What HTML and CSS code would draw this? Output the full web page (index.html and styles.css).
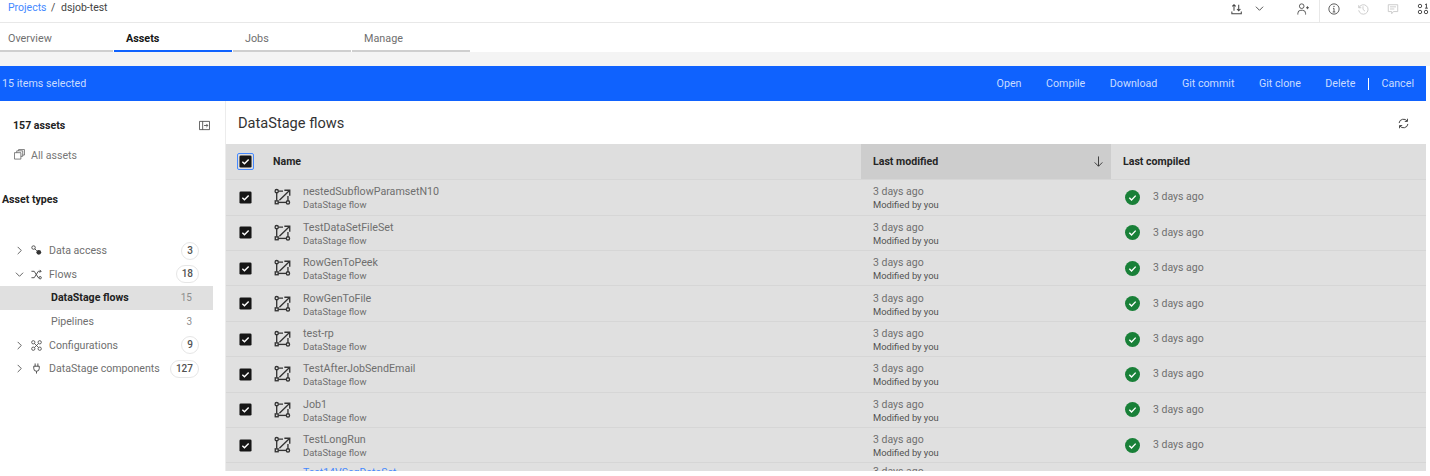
FILE: index.html
```html
<!DOCTYPE html>
<html lang="en">
<head>
    <meta charset="UTF-8">
    <title>dsjob-test</title>
    <link rel="stylesheet" href="styles.css">
</head>
<body>
    <svg class="defs" width="0" height="0">
        <symbol id="flow" viewBox="0 0 20 20">
            <g fill="none" stroke="currentColor" stroke-width="1.500">
                <circle cx="3" cy="3.500" r="1.800"/>
                <path d="M4.800 3.500h5.200M3 5.300V14"/>
                <rect x="1.400" y="14.300" width="3.200" height="3.200"/>
                <path d="M4.600 16h9"/>
                <circle cx="15.500" cy="16" r="1.800"/>
                <path d="M15.500 14.200V9M6 13.500L17.500 2.500M11.500 2.500h6v6"/>
            </g>
        </symbol>
        <symbol id="tick" viewBox="0 0 14 14">
            <rect x="0.500" y="0.500" width="13" height="13" rx="1.500" fill="#161616"/>
            <path d="M3.600 7.200l2.300 2.300 4.500-4.600" fill="none" stroke="#fff" stroke-width="1.500"/>
        </symbol>
        <symbol id="ok" viewBox="0 0 16 16">
            <circle cx="8" cy="8" r="8" fill="#198038"/>
            <path d="M4.600 8.200l2.400 2.400 4.400-4.600" fill="none" stroke="#fff" stroke-width="1.500"/>
        </symbol>
        <symbol id="chev-right" viewBox="0 0 10 10">
            <path d="M3 1l4 4-4 4" fill="none" stroke="currentColor" stroke-width="1"/>
        </symbol>
        <symbol id="chev-down" viewBox="0 0 10 10">
            <path d="M1 3l4 4 4-4" fill="none" stroke="currentColor" stroke-width="1"/>
        </symbol>
    </svg>

    <!-- Breadcrumb and actions -->
    <header class="top-bar">
        <div class="crumbs">
            <a class="crumb-link">Projects</a>
            <span class="crumb-sep">/</span>
            <span>dsjob-test</span>
        </div>
        <div class="top-icons">
            <svg class="top-icon icon-transfer" viewBox="0 0 14 14"><path d="M3.500 9V2M1.500 4l2-2 2 2M9 2v7M7 7l2 2 2-2M1 10v2.500h11V10" fill="none" stroke="currentColor" stroke-width="1.200"/></svg>
            <svg class="top-icon icon-caret" viewBox="0 0 10 10"><use href="#chev-down"/></svg>
            <svg class="top-icon icon-user" viewBox="0 0 14 14"><circle cx="5.500" cy="3.700" r="2.700" fill="none" stroke="currentColor"/><path d="M1 13.500v-1.500a3.500 3.500 0 0 1 3.500-3.500h2a3.500 3.500 0 0 1 3.500 3.500v1.500M10.500 5.500h3.500M12.200 3.800v3.400" fill="none" stroke="currentColor"/></svg>
            <span class="top-sep"></span>
            <svg class="top-icon icon-info" viewBox="0 0 14 14"><circle cx="7" cy="7" r="6" fill="none" stroke="currentColor"/><path d="M5.500 10.500h3M7 10.500V6.200H5.800" fill="none" stroke="currentColor"/><circle cx="7" cy="3.900" r=".8" fill="currentColor"/></svg>
            <svg class="top-icon icon-off icon-history" viewBox="0 0 14 14"><path d="M2 2.500v3h3M2.300 5.500a5.500 5.500 0 1 1-.3 3M7 3.800V7.500l2.300 2" fill="none" stroke="currentColor"/></svg>
            <svg class="top-icon icon-off icon-chat" viewBox="0 0 14 14"><path d="M1.500 2h11v8h-5l-2 2.500V10h-4z M3.500 4.500h7M3.500 7h5" fill="none" stroke="currentColor"/></svg>
            <svg class="top-icon icon-apps" viewBox="0 0 14 14"><g fill="none" stroke="currentColor" stroke-width="1.100"><circle cx="3.500" cy="3.500" r="2"/><circle cx="3.500" cy="10.500" r="2"/><circle cx="10.500" cy="10.500" r="2"/><path d="M9.500 2l1.500-1v5M9.300 6h3.400"/></g></svg>
        </div>
    </header>

    <nav class="tabs">
        <a class="tab">Overview</a>
        <a class="tab tab-active">Assets</a>
        <a class="tab">Jobs</a>
        <a class="tab">Manage</a>
    </nav>

    <div class="band"></div>

    <!-- Batch action bar -->
    <div class="batch-bar">
        <span class="batch-count">15 items selected</span>
        <div class="batch-actions">
            <a>Open</a>
            <a>Compile</a>
            <a>Download</a>
            <a>Git commit</a>
            <a>Git clone</a>
            <a>Delete</a>
            <span class="batch-sep"></span>
            <a>Cancel</a>
        </div>
    </div>

    <main class="main">
        <!-- Asset tree -->
        <aside class="sidebar">
            <div class="side-head">
                <span>157 assets</span>
                <svg class="side-toggle" viewBox="0 0 12 12"><path d="M.5 1.500h11v9H.5zM4 1.500v9M5.500 6h4M8 4.300L9.700 6 8 7.700" fill="none" stroke="currentColor" stroke-width=".9"/></svg>
            </div>
            <div class="all-assets">
                <svg class="all-icon" viewBox="0 0 12 12"><path d="M.5 4h7v7h-7zM3 4V2h6.500v6H7.500M5 2V.6h6.400v6H9.500" fill="none" stroke="currentColor" stroke-width=".8"/></svg>
                All assets
            </div>
            <div class="types-title">Asset types</div>
            <ul class="tree">
                <li class="tree-row">
                    <svg class="tree-caret"><use href="#chev-right"/></svg>
                    <svg class="tree-icon" viewBox="0 0 12 12"><circle cx="2.800" cy="2.800" r="1.900" fill="none" stroke="currentColor"/><path d="M4.300 4.300l2 2"/><circle cx="8.500" cy="8" r="2.600" fill="#333" stroke="none"/></svg>
                    <span class="tree-label">Data access</span>
                    <span class="badge">3</span>
                </li>
                <li class="tree-row">
                    <svg class="tree-caret"><use href="#chev-down"/></svg>
                    <svg class="tree-icon" viewBox="0 0 12 12"><path d="M.5 2.500h3L8 9.500h1M.5 9.500h3L8 2.500h3M9.500 1l1.500 1.500L9.500 4" fill="none" stroke="currentColor"/><circle cx="10" cy="9.500" r="1.300" fill="none" stroke="currentColor"/></svg>
                    <span class="tree-label">Flows</span>
                    <span class="badge">18</span>
                </li>
                <li class="tree-child tree-child-active">
                    <span>DataStage flows</span>
                    <span class="child-count">15</span>
                </li>
                <li class="tree-child">
                    <span>Pipelines</span>
                    <span class="child-count">3</span>
                </li>
                <li class="tree-row">
                    <svg class="tree-caret"><use href="#chev-right"/></svg>
                    <svg class="tree-icon" viewBox="0 0 12 12"><g fill="none" stroke="currentColor" stroke-width=".9"><circle cx="2.500" cy="2.500" r="1.800"/><circle cx="9.500" cy="2.500" r="1.800"/><circle cx="2.500" cy="9.500" r="1.800"/><circle cx="9.500" cy="9.500" r="1.800"/><path d="M3.800 3.800l4.400 4.400M8.200 3.800L3.800 8.200"/></g></svg>
                    <span class="tree-label">Configurations</span>
                    <span class="badge">9</span>
                </li>
                <li class="tree-row">
                    <svg class="tree-caret"><use href="#chev-right"/></svg>
                    <svg class="tree-icon" viewBox="0 0 12 12"><path d="M4.500.5v3M7.500.5v3M3 3.500h6v2.500a3 3 0 0 1-6 0zM6 9v2.500" fill="none" stroke="currentColor"/></svg>
                    <span class="tree-label">DataStage components</span>
                    <span class="badge">127</span>
                </li>
            </ul>
        </aside>

        <section class="content">
            <div class="content-head">
                <h1>DataStage flows</h1>
                <svg class="refresh" viewBox="0 0 12 12"><path d="M1.200 5.500A4.800 4.800 0 0 1 10 3.500M10.800 6.500A4.800 4.800 0 0 1 2 8.500M10.300 .8v2.900H7.400M1.700 11.200V8.300h2.900" fill="none" stroke="currentColor" stroke-width="1"/></svg>
            </div>

            <div class="table">
                <div class="row head-row">
                    <div class="cell-check"><span class="focus-ring"><svg class="check"><use href="#tick"/></svg></span></div>
                    <div class="cell-name">Name</div>
                    <div class="cell-mod sorted">Last modified
                        <svg class="sort-arrow" viewBox="0 0 12 12"><path d="M6 .5v10.500M1.800 7L6 11.200 10.200 7" fill="none" stroke="currentColor"/></svg>
                    </div>
                    <div class="cell-comp">Last compiled</div>
                </div>

                <div class="row">
                    <div class="cell-check"><svg class="check"><use href="#tick"/></svg></div>
                    <div class="cell-name"><svg class="flow-icon"><use href="#flow"/></svg><div class="text-stack"><div class="title">nestedSubflowParamsetN10</div><div class="sub">DataStage flow</div></div></div>
                    <div class="cell-mod"><div class="title">3 days ago</div><div class="by">Modified by you</div></div>
                    <div class="cell-comp"><svg class="ok-icon"><use href="#ok"/></svg><span class="title">3 days ago</span></div>
                </div>
                <div class="row">
                    <div class="cell-check"><svg class="check"><use href="#tick"/></svg></div>
                    <div class="cell-name"><svg class="flow-icon"><use href="#flow"/></svg><div class="text-stack"><div class="title">TestDataSetFileSet</div><div class="sub">DataStage flow</div></div></div>
                    <div class="cell-mod"><div class="title">3 days ago</div><div class="by">Modified by you</div></div>
                    <div class="cell-comp"><svg class="ok-icon"><use href="#ok"/></svg><span class="title">3 days ago</span></div>
                </div>
                <div class="row">
                    <div class="cell-check"><svg class="check"><use href="#tick"/></svg></div>
                    <div class="cell-name"><svg class="flow-icon"><use href="#flow"/></svg><div class="text-stack"><div class="title">RowGenToPeek</div><div class="sub">DataStage flow</div></div></div>
                    <div class="cell-mod"><div class="title">3 days ago</div><div class="by">Modified by you</div></div>
                    <div class="cell-comp"><svg class="ok-icon"><use href="#ok"/></svg><span class="title">3 days ago</span></div>
                </div>
                <div class="row">
                    <div class="cell-check"><svg class="check"><use href="#tick"/></svg></div>
                    <div class="cell-name"><svg class="flow-icon"><use href="#flow"/></svg><div class="text-stack"><div class="title">RowGenToFile</div><div class="sub">DataStage flow</div></div></div>
                    <div class="cell-mod"><div class="title">3 days ago</div><div class="by">Modified by you</div></div>
                    <div class="cell-comp"><svg class="ok-icon"><use href="#ok"/></svg><span class="title">3 days ago</span></div>
                </div>
                <div class="row">
                    <div class="cell-check"><svg class="check"><use href="#tick"/></svg></div>
                    <div class="cell-name"><svg class="flow-icon"><use href="#flow"/></svg><div class="text-stack"><div class="title">test-rp</div><div class="sub">DataStage flow</div></div></div>
                    <div class="cell-mod"><div class="title">3 days ago</div><div class="by">Modified by you</div></div>
                    <div class="cell-comp"><svg class="ok-icon"><use href="#ok"/></svg><span class="title">3 days ago</span></div>
                </div>
                <div class="row">
                    <div class="cell-check"><svg class="check"><use href="#tick"/></svg></div>
                    <div class="cell-name"><svg class="flow-icon"><use href="#flow"/></svg><div class="text-stack"><div class="title">TestAfterJobSendEmail</div><div class="sub">DataStage flow</div></div></div>
                    <div class="cell-mod"><div class="title">3 days ago</div><div class="by">Modified by you</div></div>
                    <div class="cell-comp"><svg class="ok-icon"><use href="#ok"/></svg><span class="title">3 days ago</span></div>
                </div>
                <div class="row">
                    <div class="cell-check"><svg class="check"><use href="#tick"/></svg></div>
                    <div class="cell-name"><svg class="flow-icon"><use href="#flow"/></svg><div class="text-stack"><div class="title">Job1</div><div class="sub">DataStage flow</div></div></div>
                    <div class="cell-mod"><div class="title">3 days ago</div><div class="by">Modified by you</div></div>
                    <div class="cell-comp"><svg class="ok-icon"><use href="#ok"/></svg><span class="title">3 days ago</span></div>
                </div>
                <div class="row">
                    <div class="cell-check"><svg class="check"><use href="#tick"/></svg></div>
                    <div class="cell-name"><svg class="flow-icon"><use href="#flow"/></svg><div class="text-stack"><div class="title">TestLongRun</div><div class="sub">DataStage flow</div></div></div>
                    <div class="cell-mod"><div class="title">3 days ago</div><div class="by">Modified by you</div></div>
                    <div class="cell-comp"><svg class="ok-icon"><use href="#ok"/></svg><span class="title">3 days ago</span></div>
                </div>
                <div class="row row-cut">
                    <div class="cell-check"></div>
                    <div class="cell-name"><span class="flow-spacer"></span><div class="title title-link">Test14VSeqDataSet</div></div>
                    <div class="cell-mod"><div class="title">3 days ago</div></div>
                    <div class="cell-comp"></div>
                </div>
            </div>
        </section>
    </main>
</body>
</html>
```

FILE: styles.css
```css
* {
    box-sizing: border-box;
}
html, body {
    height: 476px;
    overflow: hidden;
}
body {
    margin: 0;
    background-color: #fff;
    color: #161616;
    font-family: Roboto, "Liberation Sans", sans-serif;
    font-size: 10.600px;
}
.defs {
    display: block;
    height: 0;
}

/* top bar */
.top-bar {
    display: flex;
    justify-content: space-between;
    align-items: center;
    height: 23px;
    padding: 0 0 7px 8px;
    border-bottom: 1px solid #e8e8e8;
    font-size: 10.500px;
    color: #444;
}
.crumb-link {
    color: #4589ff;
}
.crumb-sep {
    margin: 0 3px 0 2px;
}
.top-icons {
    display: flex;
    align-items: center;
    height: 22px;
    margin-bottom: -7px;
    color: #444;
}
.top-icon {
    display: block;
    width: 12px;
    height: 12px;
    margin-top: -5px;
}
.icon-transfer {
    margin-right: 12px;
}
.icon-caret {
    width: 9px;
    height: 9px;
    margin-right: 33px;
}
.icon-user {
    margin-right: 10px;
}
.top-sep {
    width: 1px;
    height: 22px;
    margin-right: 8px;
    background-color: #e8e8e8;
}
.icon-info {
    margin-right: 17px;
}
.icon-history {
    margin-right: 18px;
}
.icon-chat {
    margin-right: 18px;
}
.icon-off {
    color: #c6c6c6;
}
.icon-apps {
    margin-right: 1px;
}

/* tabs */
.tabs {
    display: flex;
    height: 29px;
    gap: 1px;
}
.tab {
    width: 118px;
    padding: 9px 0 0 12px;
    border-bottom: 2px solid #cfcfcf;
    color: #6f6f6f;
    font-size: 10.800px;
}
.tab:first-child {
    width: 113px;
    padding-left: 8px;
}
.tab-active {
    border-bottom-color: #0f62fe;
    color: #161616;
    font-weight: 700;
}
.band {
    height: 14px;
    background-color: #f4f4f4;
}

/* batch bar */
.batch-bar {
    display: flex;
    justify-content: space-between;
    align-items: center;
    width: 1426px;
    height: 35px;
    padding: 0 12px 0 2px;
    background-color: #0f62fe;
    color: #c9dcff;
    font-size: 10.700px;
}
.batch-actions {
    display: flex;
    align-items: center;
    gap: 24.500px;
}
.batch-sep {
    width: 1px;
    height: 12px;
    margin: 0 -12px;
    background-color: #fff;
}

/* main area */
.main {
    display: flex;
    height: 370px;
    overflow: hidden;
}
.sidebar {
    width: 226px;
    flex-shrink: 0;
    border-right: 1px solid #ececec;
}
.side-head {
    display: flex;
    justify-content: space-between;
    align-items: center;
    height: 16px;
    margin: 16px 15px 0 13px;
    font-weight: 700;
    color: #222;
}
.side-toggle {
    width: 11px;
    height: 11px;
    color: #444;
}
.all-assets {
    display: flex;
    align-items: center;
    gap: 6px;
    margin: 16px 0 0 14px;
    color: #777;
}
.all-icon {
    width: 11px;
    height: 11px;
    margin-top: -3px;
    color: #555;
}
.types-title {
    margin: 31px 0 0 2px;
    font-weight: 700;
    color: #222;
}
.tree {
    width: 213px;
    margin: 33px 0 0;
    padding: 0;
    list-style: none;
    color: #6f6f6f;
}
.tree-row {
    display: flex;
    align-items: center;
    height: 23.600px;
    padding: 0 14px 0 15px;
}
.tree-caret {
    width: 9px;
    height: 9px;
    margin-right: 7px;
    color: #555;
}
.tree-icon {
    width: 11px;
    height: 11px;
    margin-right: 7px;
    stroke: #444;
    color: #444;
}
.tree-label {
    flex: 1;
}
.badge {
    min-width: 18px;
    height: 18px;
    padding: 0 5px;
    border: 1px solid #e6e6e6;
    border-radius: 9px;
    color: #525252;
    font-weight: 500;
    font-size: 10px;
    line-height: 16px;
    text-align: center;
}
.tree-child {
    display: flex;
    justify-content: space-between;
    align-items: center;
    height: 23.600px;
    padding: 0 21px 0 51px;
}
.tree-child-active {
    background-color: #e0e0e0;
    color: #222;
    font-weight: 700;
}
.child-count {
    color: #8d8d8d;
    font-size: 10px;
    font-weight: 400;
}

/* table */
.content {
    width: 1200px;
    flex-shrink: 0;
}
.content-head {
    display: flex;
    justify-content: space-between;
    align-items: center;
    height: 43px;
    padding: 1px 17px 0 12px;
}
.content-head h1 {
    margin: 0;
    font-size: 14.600px;
    font-weight: 400;
    color: #333;
}
.refresh {
    width: 11px;
    height: 11px;
    color: #333;
}
.table {
    height: 327px;
    overflow: hidden;
    background-color: #e0e0e0;
}
.row {
    display: grid;
    grid-template-columns: 34px 601px 250px 1fr;
    height: 35.400px;
    border-bottom: 1px solid #d6d6d6;
}
.row > div {
    display: flex;
    align-items: center;
}
.head-row {
    height: 36.300px;
    font-weight: 700;
    color: #262626;
    background-color: #dedede;
}
.cell-check {
    justify-content: center;
    padding-left: 5px;
}
.check {
    display: block;
    width: 13px;
    height: 13px;
}
.focus-ring {
    padding: 1px;
    border: 1px solid #4589ff;
    border-radius: 2px;
}
.cell-name {
    gap: 11px;
    padding-left: 14px;
}
.text-stack {
    margin-top: 2px;
}
.flow-icon {
    width: 18px;
    height: 18px;
    flex-shrink: 0;
    color: #333;
}
.flow-spacer {
    width: 18px;
}
.row > .cell-mod {
    flex-direction: column;
    align-items: flex-start;
    justify-content: center;
    padding: 2px 0 0 12px;
}
.head-row > .cell-mod {
    flex-direction: row;
    align-items: center;
    justify-content: space-between;
    padding: 0 7px 0 12px;
}
.head-row > .cell-name {
    padding-left: 13px;
}
.sorted {
    background-color: #cdcdcd;
}
.sort-arrow {
    width: 11px;
    height: 11px;
    color: #333;
}
.cell-comp {
    gap: 13px;
    padding-left: 14px;
}
.head-row > .cell-comp {
    padding-left: 12px;
}
.ok-icon {
    width: 15px;
    height: 15px;
}
.title {
    color: #6f6f6f;
    font-size: 10.500px;
    line-height: 14px;
}
.text-stack .title {
    font-size: 10.700px;
}
.title-link {
    color: #4589ff;
}
.sub {
    color: #6f6f6f;
    font-size: 9.400px;
    line-height: 12px;
}
.by {
    color: #525252;
    font-size: 9.400px;
    line-height: 12px;
}

/* row that the bottom of the page cuts through */
.row-cut > div {
    align-items: flex-start;
    padding-top: 3px;
}
.row-cut > .cell-mod {
    justify-content: flex-start;
}
.row-cut > .cell-name {
    padding-left: 13px;
    gap: 12px;
}
```
